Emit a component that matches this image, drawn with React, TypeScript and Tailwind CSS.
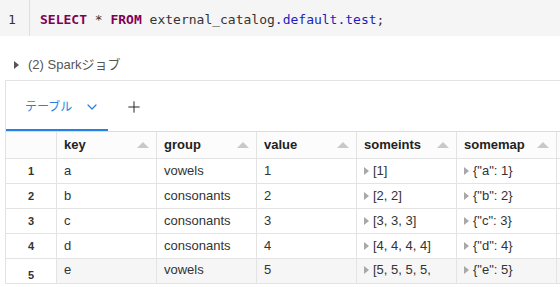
import { ChevronDown, Plus } from 'lucide-react'

const sans = { fontFamily: '"Liberation Sans", "Noto Sans CJK JP", Arial, sans-serif' }

const columns = ['key', 'group', 'value', 'someints', 'somemap', '']

const rows = [
  { n: 1, key: 'a', group: 'vowels', value: '1', ints: '[1]', map: '{"a": 1}' },
  { n: 2, key: 'b', group: 'consonants', value: '2', ints: '[2, 2]', map: '{"b": 2}' },
  { n: 3, key: 'c', group: 'consonants', value: '3', ints: '[3, 3, 3]', map: '{"c": 3}' },
  { n: 4, key: 'd', group: 'consonants', value: '4', ints: '[4, 4, 4, 4]', map: '{"d": 4}' },
  { n: 5, key: 'e', group: 'vowels', value: '5', ints: '[5, 5, 5, 5,', map: '{"e": 5}' },
]

function Caret() {
  return <span className="inline-block w-0 h-0 border-y-[4px] border-y-transparent border-l-[5px] border-l-[#a8a8a8] mr-[4px]" />
}

function Cell({ children, last }: { children?: React.ReactNode; last?: boolean }) {
  return (
    <div className={`w-[100px] shrink-0 border-r border-[#e3e3e3] pl-[7px] flex ${last ? 'items-start pt-[1px]' : 'items-center'} whitespace-nowrap overflow-hidden`}>
      {children}
    </div>
  )
}

export default function App() {
  return (
    <div className="w-[560px] h-[287px] overflow-hidden bg-white" style={sans}>
      {/* editor */}
      <div className="h-[36px] bg-[#f5f5f5] flex">
        <div className="w-[30px] shrink-0 border-r border-[#dedede] pl-[8px] pt-[10px] text-[13px] text-[#333]" style={{ fontFamily: '"DejaVu Sans Mono", monospace' }}>
          1
        </div>
        <div className="pl-[10px] pt-[10px] text-[13px] leading-[19px] whitespace-nowrap text-[#333]" style={{ fontFamily: '"DejaVu Sans Mono", monospace' }}>
          <span className="font-bold text-[#7f0055]">SELECT</span> * <span className="font-bold text-[#7f0055]">FROM</span> external_catalog<span className="text-[#1d1dbd]">.default.test</span>;
        </div>
      </div>

      {/* spark jobs */}
      <div className="mt-[19px] h-[20px] flex items-center pl-[14px] text-[13px] text-[#555]">
        <span className="inline-block w-0 h-0 border-y-[4px] border-y-transparent border-l-[5px] border-l-[#555] mr-[9px]" />
        (2) Sparkジョブ
      </div>

      {/* results */}
      <div className="mt-[5px] ml-[5px] border-l border-t border-[#e3e3e3]">
        <div className="h-[51px] flex items-end border-b border-[#dcdcdc]">
          <div className="w-[102px] shrink-0 h-[50px] border-b-2 border-[#2482e3] flex items-center pl-[19px] pt-[3px] text-[12px] whitespace-nowrap text-[#2482e3]">
            テーブル
            <ChevronDown size={16} strokeWidth={1.8} className="ml-[12px] shrink-0" />
          </div>
          <div className="h-[50px] flex items-center pl-[17px] pt-[1px] text-[#222]">
            <Plus size={18} strokeWidth={1.3} />
          </div>
        </div>

        {/* header */}
        <div className="h-[27px] flex border-b border-[#e3e3e3] bg-[#fcfcfc] text-[13px] font-bold text-[#222]">
          <div className="w-[51px] shrink-0 border-r border-[#e3e3e3]" />
          {columns.map((c, i) => (
            <div key={i} className="w-[100px] shrink-0 border-r border-[#e3e3e3] pl-[7px] pr-[7px] flex items-center justify-between">
              <span>{c}</span>
              {c && <span className="inline-block w-0 h-0 border-x-[6px] border-x-transparent border-b-[6px] border-b-[#c9c9c9]" />}
            </div>
          ))}
        </div>

        {/* rows */}
        {rows.map((r) => {
          const last = r.n === 5
          return (
            <div key={r.n} className={`h-[25px] flex border-b border-[#e3e3e3] text-[13px] text-[#333] ${last ? 'bg-[#f6f6f6]' : ''}`}>
              <div className={`w-[51px] shrink-0 border-r border-[#e3e3e3] bg-white flex justify-center text-[11px] font-bold text-[#333] ${last ? 'items-end' : 'items-center'}`}>
                {r.n}
              </div>
              <Cell last={last}>{r.key}</Cell>
              <Cell last={last}>{r.group}</Cell>
              <Cell last={last}>{r.value}</Cell>
              <Cell last={last}>
                <span className="flex items-center"><Caret />{r.ints}</span>
              </Cell>
              <Cell last={last}>
                <span className="flex items-center"><Caret />{r.map}</span>
              </Cell>
              <Cell last={last} />
            </div>
          )
        })}
      </div>
    </div>
  )
}
